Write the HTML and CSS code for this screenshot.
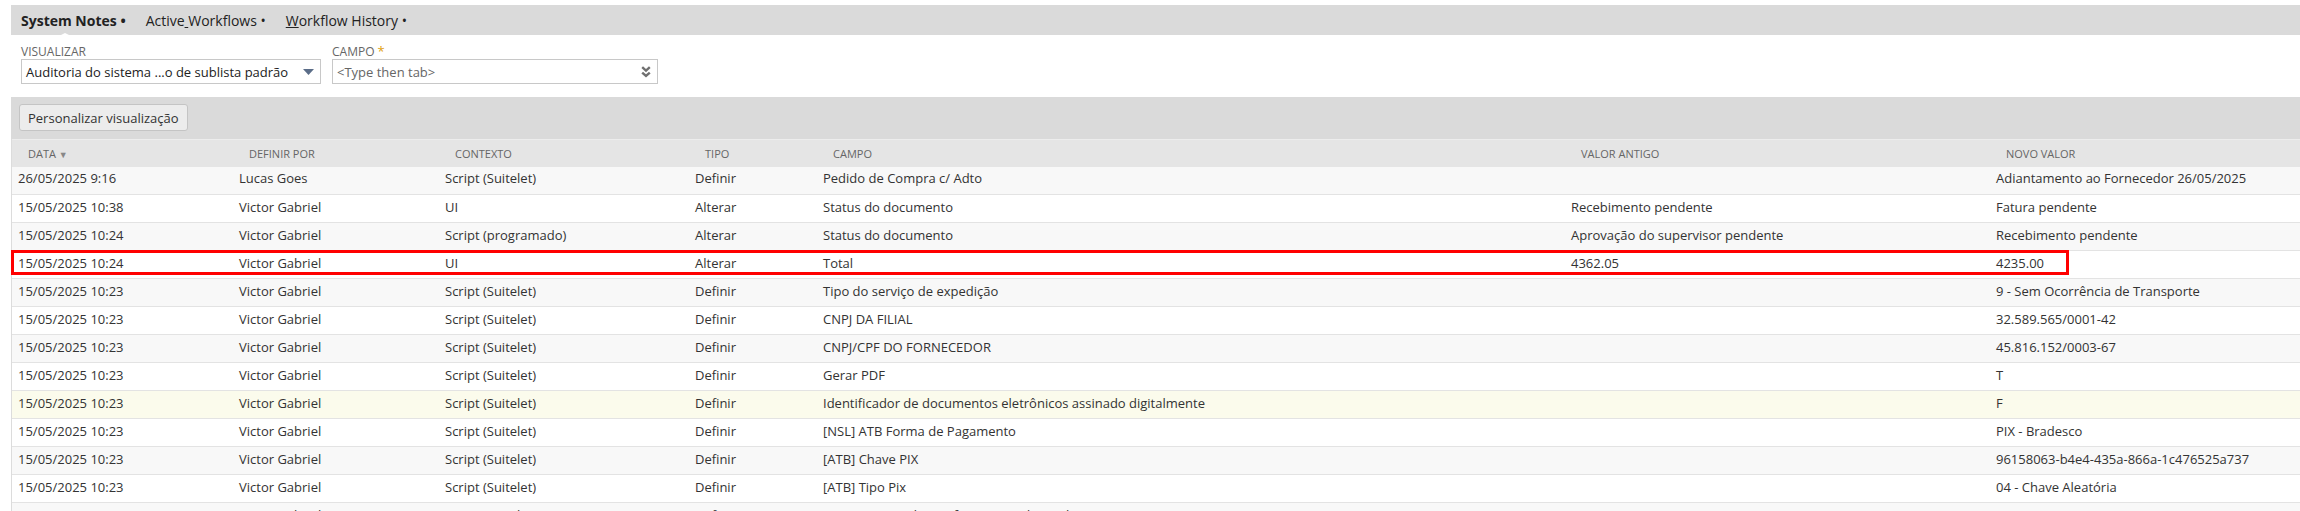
FILE: index.html
```html
<!DOCTYPE html>
<html lang="pt-BR">
<head>
  <meta charset="UTF-8">
  <title>System Notes</title>
  <link rel="stylesheet" href="styles.css">
</head>
<body>
  <div class="page">

    <!-- Subabas -->
    <div class="tabs">
      <span class="tab active">System Notes <span class="dot">•</span></span>
      <span class="tab">Active<u> </u>Workflows <span class="dot">•</span></span>
      <span class="tab"><u>W</u>orkflow History <span class="dot">•</span></span>
    </div>

    <!-- Filtros -->
    <div class="filters">
      <div class="field">
        <label>Visualizar</label>
        <div class="select">
          <span>Auditoria do sistema ...o de sublista padrão</span>
          <svg width="11" height="6" viewBox="0 0 11 6"><path d="M0 0 H11 L5.5 6 Z" fill="#5b6d88"/></svg>
        </div>
      </div>
      <div class="field">
        <label>Campo <span class="req">*</span></label>
        <div class="input">
          <span class="placeholder">&lt;Type then tab&gt;</span>
          <svg width="10" height="12" viewBox="0 0 10 12"><path d="M1.2 1.2 L5 4.6 L8.8 1.2 M1.2 6.6 L5 10 L8.8 6.6" fill="none" stroke="#707070" stroke-width="2.4"/></svg>
        </div>
      </div>
    </div>

    <div class="toolbar">
      <button class="btn">Personalizar visualização</button>
    </div>

    <!-- Lista de notas -->
    <div class="list">
      <table>
        <colgroup>
          <col style="width:221px">
          <col style="width:206px">
          <col style="width:250px">
          <col style="width:128px">
          <col style="width:748px">
          <col style="width:425px">
          <col>
        </colgroup>
        <thead>
          <tr>
            <th>Data <span class="sort">▼</span></th>
            <th>Definir por</th>
            <th>Contexto</th>
            <th>Tipo</th>
            <th>Campo</th>
            <th>Valor antigo</th>
            <th>Novo valor</th>
          </tr>
        </thead>
        <tbody>
          <tr><td>26/05/2025 9:16</td><td>Lucas Goes</td><td>Script (Suitelet)</td><td>Definir</td><td>Pedido de Compra c/ Adto</td><td></td><td>Adiantamento ao Fornecedor 26/05/2025</td></tr>
          <tr><td>15/05/2025 10:38</td><td>Victor Gabriel</td><td>UI</td><td>Alterar</td><td>Status do documento</td><td>Recebimento pendente</td><td>Fatura pendente</td></tr>
          <tr><td>15/05/2025 10:24</td><td>Victor Gabriel</td><td>Script (programado)</td><td>Alterar</td><td>Status do documento</td><td>Aprovação do supervisor pendente</td><td>Recebimento pendente</td></tr>
          <tr><td>15/05/2025 10:24</td><td>Victor Gabriel</td><td>UI</td><td>Alterar</td><td>Total</td><td>4362.05</td><td>4235.00</td></tr>
          <tr><td>15/05/2025 10:23</td><td>Victor Gabriel</td><td>Script (Suitelet)</td><td>Definir</td><td>Tipo do serviço de expedição</td><td></td><td>9 - Sem Ocorrência de Transporte</td></tr>
          <tr><td>15/05/2025 10:23</td><td>Victor Gabriel</td><td>Script (Suitelet)</td><td>Definir</td><td>CNPJ DA FILIAL</td><td></td><td>32.589.565/0001-42</td></tr>
          <tr><td>15/05/2025 10:23</td><td>Victor Gabriel</td><td>Script (Suitelet)</td><td>Definir</td><td>CNPJ/CPF DO FORNECEDOR</td><td></td><td>45.816.152/0003-67</td></tr>
          <tr><td>15/05/2025 10:23</td><td>Victor Gabriel</td><td>Script (Suitelet)</td><td>Definir</td><td>Gerar PDF</td><td></td><td>T</td></tr>
          <tr class="hover"><td>15/05/2025 10:23</td><td>Victor Gabriel</td><td>Script (Suitelet)</td><td>Definir</td><td>Identificador de documentos eletrônicos assinado digitalmente</td><td></td><td>F</td></tr>
          <tr><td>15/05/2025 10:23</td><td>Victor Gabriel</td><td>Script (Suitelet)</td><td>Definir</td><td>[NSL] ATB Forma de Pagamento</td><td></td><td>PIX - Bradesco</td></tr>
          <tr><td>15/05/2025 10:23</td><td>Victor Gabriel</td><td>Script (Suitelet)</td><td>Definir</td><td>[ATB] Chave PIX</td><td></td><td>96158063-b4e4-435a-866a-1c476525a737</td></tr>
          <tr><td>15/05/2025 10:23</td><td>Victor Gabriel</td><td>Script (Suitelet)</td><td>Definir</td><td>[ATB] Tipo Pix</td><td></td><td>04 - Chave Aleatória</td></tr>
          <tr><td>15/05/2025 10:23</td><td>Victor Gabriel</td><td>Script (Suitelet)</td><td>Definir</td><td>[NSL] ATB Atualizar informação adicional</td><td></td><td>F</td></tr>
        </tbody>
      </table>

      <!-- Destaque vermelho sobre a linha do Total -->
      <div class="mark"></div>
    </div>

  </div>
</body>
</html>
```

FILE: styles.css
```css
/* Base */
* {
  box-sizing: border-box;
}

body {
  margin: 0;
  background: #fff;
  font-family: 'Open Sans', 'Liberation Sans', sans-serif;
  color: #333;
  overflow: hidden;
}

.page {
  padding: 5px 0 0 11px;
}

/* Subabas */
.tabs {
  display: flex;
  align-items: center;
  height: 30px;
  background: #dadada;
}

.tab {
  position: relative;
  padding: 0 10px;
  font-size: 14px;
  color: #222;
  white-space: pre;
}

.tab.active {
  font-weight: bold;
}

/* triangulo branco embaixo da aba ativa */
.tab.active::after {
  content: '';
  position: absolute;
  left: 46px;
  bottom: -7px;
  border-left: 8px solid transparent;
  border-right: 8px solid transparent;
  border-bottom: 4px solid #fff;
}

/* Filtros */
.filters {
  display: flex;
  gap: 11px;
  padding: 10px 10px 13px;
  background: #fff;
}

.field label {
  display: block;
  height: 14px;
  font-size: 12px;
  line-height: 14px;
  color: #666;
  text-transform: uppercase;
}

.req {
  color: #e0a010;
  font-size: 13px;
  line-height: 0;
}

.select,
.input {
  display: flex;
  align-items: center;
  justify-content: space-between;
  height: 25px;
  border: 1px solid #c8c8c8;
  background: #fff;
  font-size: 13px;
}

.select {
  width: 300px;
  padding: 0 6px 0 4px;
  color: #222;
}

.input {
  width: 326px;
  padding: 0 6px 0 4px;
}

.placeholder {
  color: #666;
}

/* Barra do botao */
.toolbar {
  display: flex;
  padding: 7px 8px 8px;
  background: #dadada;
}

.btn {
  height: 27px;
  padding: 0 8px;
  border: 1px solid #c4c4c4;
  border-radius: 3px;
  background: #ececec;
  font-family: inherit;
  font-size: 13px;
  color: #333;
}

/* Lista */
.list {
  position: relative;
  border-left: 1px solid #dcdcdc;
}

table {
  width: 100%;
  border-collapse: collapse;
  table-layout: fixed;
  font-size: 13px;
}

th {
  height: 27px;
  padding: 0 6px 0 16px;
  background: #e5e5e5;
  border-top: 1px solid #ededed;
  font-size: 11px;
  font-weight: normal;
  color: #666;
  text-align: left;
  text-transform: uppercase;
}

.sort {
  font-size: 9px;
  color: #888;
}

tbody tr {
  height: 28px;
}

td {
  padding: 0 6px 4px;
  border-bottom: 1px solid #e3e3e3;
  white-space: nowrap;
  overflow: hidden;
  color: #333;
}

tbody tr:nth-child(odd) td {
  background: #f8f8f8;
}

tbody tr.hover td {
  background: #fbfbec;
}

.mark {
  position: absolute;
  top: 111px;
  left: -1px;
  width: 2058px;
  height: 25px;
  border: 3px solid #f00;
}
```
